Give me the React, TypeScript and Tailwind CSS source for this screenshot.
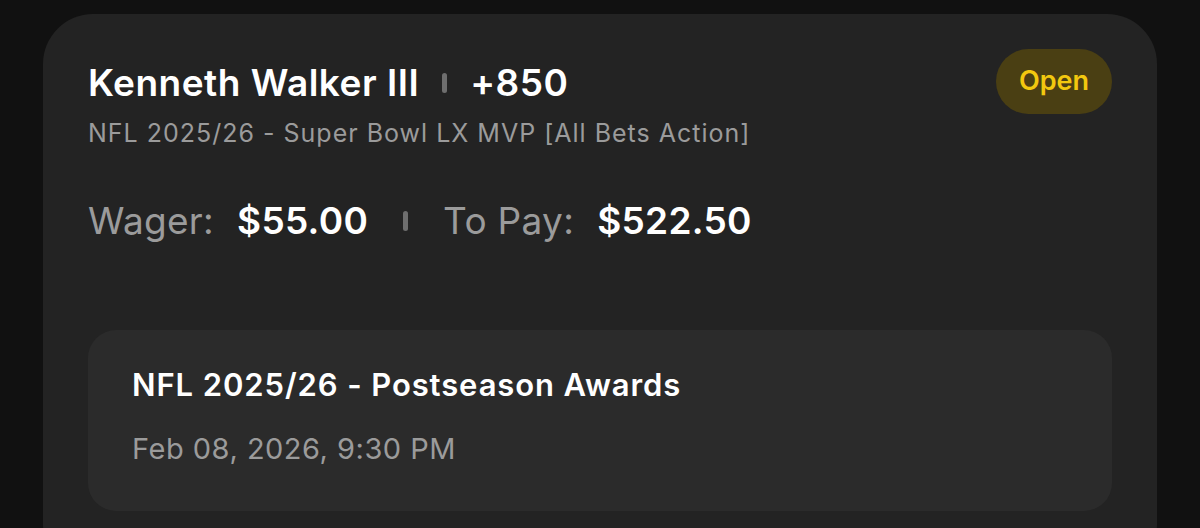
import React from "react";

export default function App() {
  return (
    <div
      className="h-[528px] w-[1200px] overflow-hidden bg-[#111111] px-[43px] pt-[14px]"
      style={{ fontFamily: "Inter, 'Noto Sans', sans-serif" }}
    >
      <div className="h-[560px] rounded-[50px] bg-[#232323] px-[45px] pt-[35px]">
        <div className="flex items-start justify-between">
          <div className="mt-[11px]">
            <div className="flex items-center text-[37px] leading-[45px] font-semibold tracking-[0.5px] text-white">
              <span>Kenneth Walker III</span>
              <span className="mx-[23px] h-[20px] w-[5px] rounded-full bg-[#6e6e6e]" />
              <span>+850</span>
            </div>
            <div className="mt-[13px] text-[25px] leading-[30px] tracking-[1px] text-[#9b9b9b]">
              NFL 2025/26 - Super Bowl LX MVP [All Bets Action]
            </div>
          </div>
          <div className="flex h-[65px] w-[116px] items-center justify-center rounded-full bg-[#4a3f13] text-[27px] font-semibold text-[#f2c80f]">
            Open
          </div>
        </div>

        <div className="mt-[50px] flex items-center text-[37px] leading-[45px] tracking-[0.3px]">
          <span className="text-[#9b9b9b]">Wager:</span>
          <span className="ml-[23px] font-semibold text-white">$55.00</span>
          <span className="mx-[35px] h-[20px] w-[5px] rounded-full bg-[#6e6e6e]" />
          <span className="text-[#9b9b9b]">To Pay:</span>
          <span className="ml-[23px] font-semibold text-white">$522.50</span>
        </div>

        <div className="mt-[87px] h-[181px] rounded-[28px] bg-[#2b2b2b] px-[44px] pt-[36px]">
          <div className="text-[31px] leading-[38px] font-semibold tracking-[0.9px] text-white">
            NFL 2025/26 - Postseason Awards
          </div>
          <div className="mt-[27px] text-[29px] leading-[35px] tracking-[0.5px] text-[#9b9b9b]">
            Feb 08, 2026, 9:30 PM
          </div>
        </div>
      </div>
    </div>
  );
}
